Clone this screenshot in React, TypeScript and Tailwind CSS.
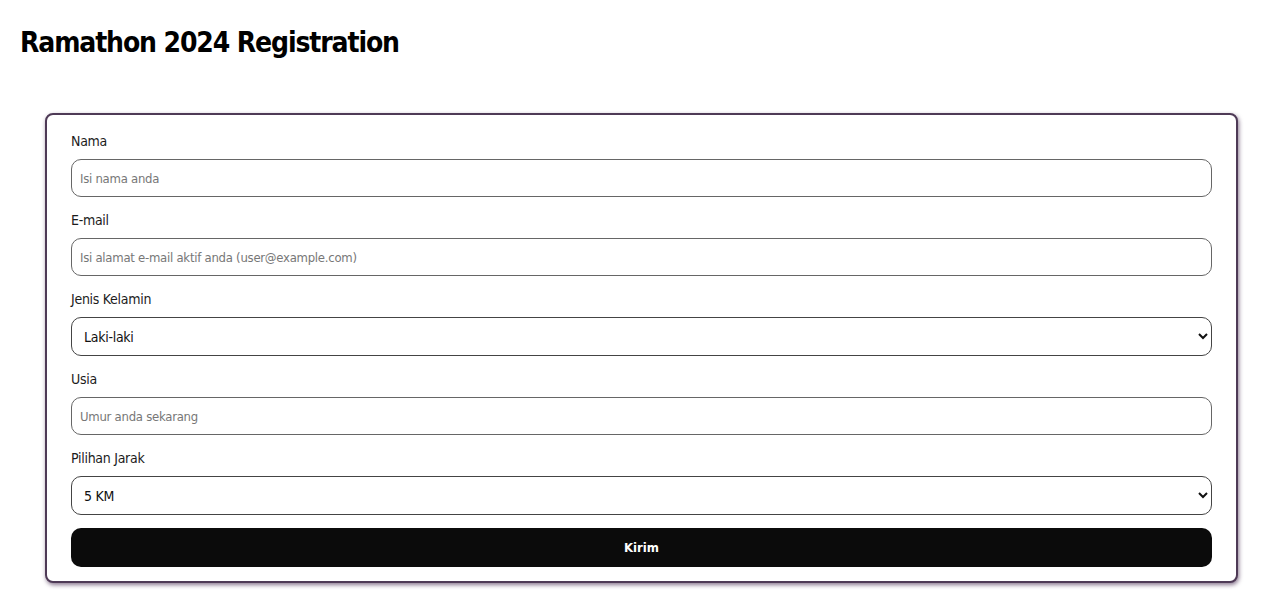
import React from 'react';

function Field({ label, children }: { label: string; children: React.ReactNode }) {
  return (
    <div className="flex flex-col">
      <label className="h-6 flex items-center text-[14px] tracking-[-0.02em] text-[#1c1c1c]">{label}</label>
      <div className="mt-1.5">{children}</div>
    </div>
  );
}

const inputCls =
  'w-full h-[38px] rounded-[10px] border border-[#666] px-2 text-[13px] tracking-[-0.02em] text-[#222] placeholder:text-[#777] outline-none bg-white';

const selectCls =
  'w-full h-[39px] rounded-[10px] border border-[#444] pl-2 pr-1 text-[14px] tracking-[-0.02em] text-[#111] bg-white outline-none';

export default function App() {
  return (
    <div className="min-h-screen bg-white px-5 pt-[27px] font-['DejaVu_Sans_Condensed','Liberation_Sans',sans-serif]">
      <h1 className="text-[28px] font-bold leading-[32px] tracking-[-0.04em] text-black">Ramathon 2024 Registration</h1>
      <form className="mt-[54px] ml-[25px] mr-[22px] rounded-lg border-2 border-[#4e3a56] bg-white px-6 py-3.5 shadow-[1px_2px_4px_rgba(60,30,70,0.6)] flex flex-col gap-[11px]">
        <Field label="Nama">
          <input className={inputCls} placeholder="Isi nama anda" />
        </Field>
        <Field label="E-mail">
          <input className={inputCls} placeholder="Isi alamat e-mail aktif anda (user@example.com)" />
        </Field>
        <Field label="Jenis Kelamin">
          <select className={selectCls} defaultValue="Laki-laki">
            <option>Laki-laki</option>
            <option>Perempuan</option>
          </select>
        </Field>
        <Field label="Usia">
          <input className={inputCls} placeholder="Umur anda sekarang" />
        </Field>
        <Field label="Pilihan Jarak">
          <select className={selectCls} defaultValue="5 KM">
            <option>5 KM</option>
            <option>10 KM</option>
          </select>
        </Field>
        <button
          type="button"
          className="mt-0.5 h-[39px] w-full rounded-[10px] bg-[#0b0b0b] text-[13px] font-bold text-white"
        >
          Kirim
        </button>
      </form>
    </div>
  );
}
